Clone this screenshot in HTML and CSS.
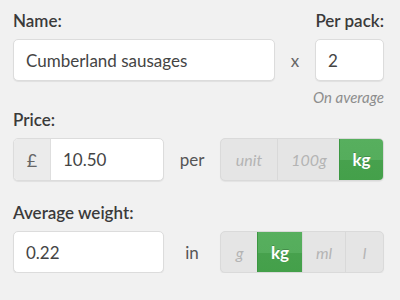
FILE: index.html
```html
<!DOCTYPE html>
<html>
<head>
<meta charset="utf-8">
<link rel="stylesheet" href="styles.css">
</head>
<body>
<div class="form">
  <div class="name-grid">
    <div class="label">Name:</div>
    <div></div>
    <div class="label right">Per pack:</div>
    <div class="input">Cumberland sausages</div>
    <div class="mult">x</div>
    <div class="input">2</div>
    <div></div>
    <div></div>
    <div class="note">On average</div>
  </div>

  <div class="label price-label">Price:</div>
  <div class="row">
    <div class="input group"><span class="addon">£</span><span class="value">10.50</span></div>
    <div class="joiner">per</div>
    <div class="seg">
      <span class="opt w-unit">unit</span>
      <span class="opt w-100g">100g</span>
      <span class="opt on w-kg">kg</span>
    </div>
  </div>

  <div class="label weight-label">Average weight:</div>
  <div class="row row-b">
    <div class="input">0.22</div>
    <div class="joiner">in</div>
    <div class="seg">
      <span class="opt w-g">g</span>
      <span class="opt on w-kg2">kg</span>
      <span class="opt w-ml">ml</span>
      <span class="opt w-l">l</span>
    </div>
  </div>
</div>
</body>
</html>
```

FILE: styles.css
```css
html, body {
  margin: 0;
  padding: 0;
  background: #f1f1f1;
  font-family: Lato, "Open Sans", sans-serif;
}

.form {
  width: 371px;
  padding: 11px 0 0 13px;
}

.label {
  font-size: 17px;
  line-height: 20px;
  height: 20px;
  font-weight: 600;
  color: #3a3a3a;
  margin-bottom: 8px;
  white-space: nowrap;
}

.label.right {
  justify-self: end;
}

.name-grid {
  display: grid;
  grid-template-columns: 262px 40px 69px;
}

.input {
  box-sizing: border-box;
  height: 42px;
  background: #fff;
  border: 1px solid #dcdcdc;
  border-radius: 5px;
  box-shadow: 0 1px 1px rgba(0, 0, 0, 0.07);
  font-size: 17px;
  color: #444;
  display: flex;
  align-items: center;
  padding-left: 12px;
}

.mult {
  font-size: 17px;
  color: #666;
  display: flex;
  align-items: center;
  justify-content: center;
}

.note {
  font-size: 15px;
  font-style: italic;
  color: #8d8d8d;
  line-height: 17px;
  margin-top: 8px;
  justify-self: end;
  white-space: nowrap;
}

.price-label {
  margin-top: 4px;
}

.weight-label {
  margin-top: 22px;
}

.row {
  display: grid;
  grid-template-columns: 151px 56px 164px;
}

.row > .input, .row > .seg {
  height: 43px;
}

.row-b > .input, .row-b > .seg {
  height: 42px;
}

.group {
  padding-left: 0;
  overflow: hidden;
}

.addon {
  width: 36px;
  align-self: stretch;
  display: flex;
  align-items: center;
  justify-content: center;
  background: #ebebeb;
  border-right: 1px solid #dedede;
  color: #666;
  font-size: 18px;
}

.value {
  padding-left: 12px;
}

.joiner {
  font-size: 17px;
  color: #555;
  display: flex;
  align-items: center;
  justify-content: center;
}

.seg {
  box-sizing: border-box;
  display: flex;
  background: #e5e5e5;
  border: 1px solid #dadada;
  border-radius: 5px;
  box-shadow: 0 1px 1px rgba(0, 0, 0, 0.06);
  overflow: hidden;
}

.opt {
  display: flex;
  align-items: center;
  justify-content: center;
  font-size: 16px;
  font-style: italic;
  color: #b4b4b4;
  border-left: 1px solid #d9d9d9;
  box-sizing: border-box;
}

.opt:first-child {
  border-left: none;
}

.opt.on {
  font-style: normal;
  font-weight: 700;
  font-size: 17px;
  color: #fff;
  background: linear-gradient(#57af5e 0%, #55ad5c 52%, #47a14d 52%, #44a04a 100%);
  border: 1px solid #3c9742;
  margin: -1px;
  text-shadow: 0 -1px 0 rgba(0, 0, 0, 0.2);
}

.w-unit { width: 56px; }
.w-100g { width: 63px; }
.w-kg { width: 45px; margin-right: -1px; }

.w-g { width: 37px; }
.w-kg2 { width: 46px; }
.w-ml { width: 43px; }
.w-l { width: 38px; }
```
